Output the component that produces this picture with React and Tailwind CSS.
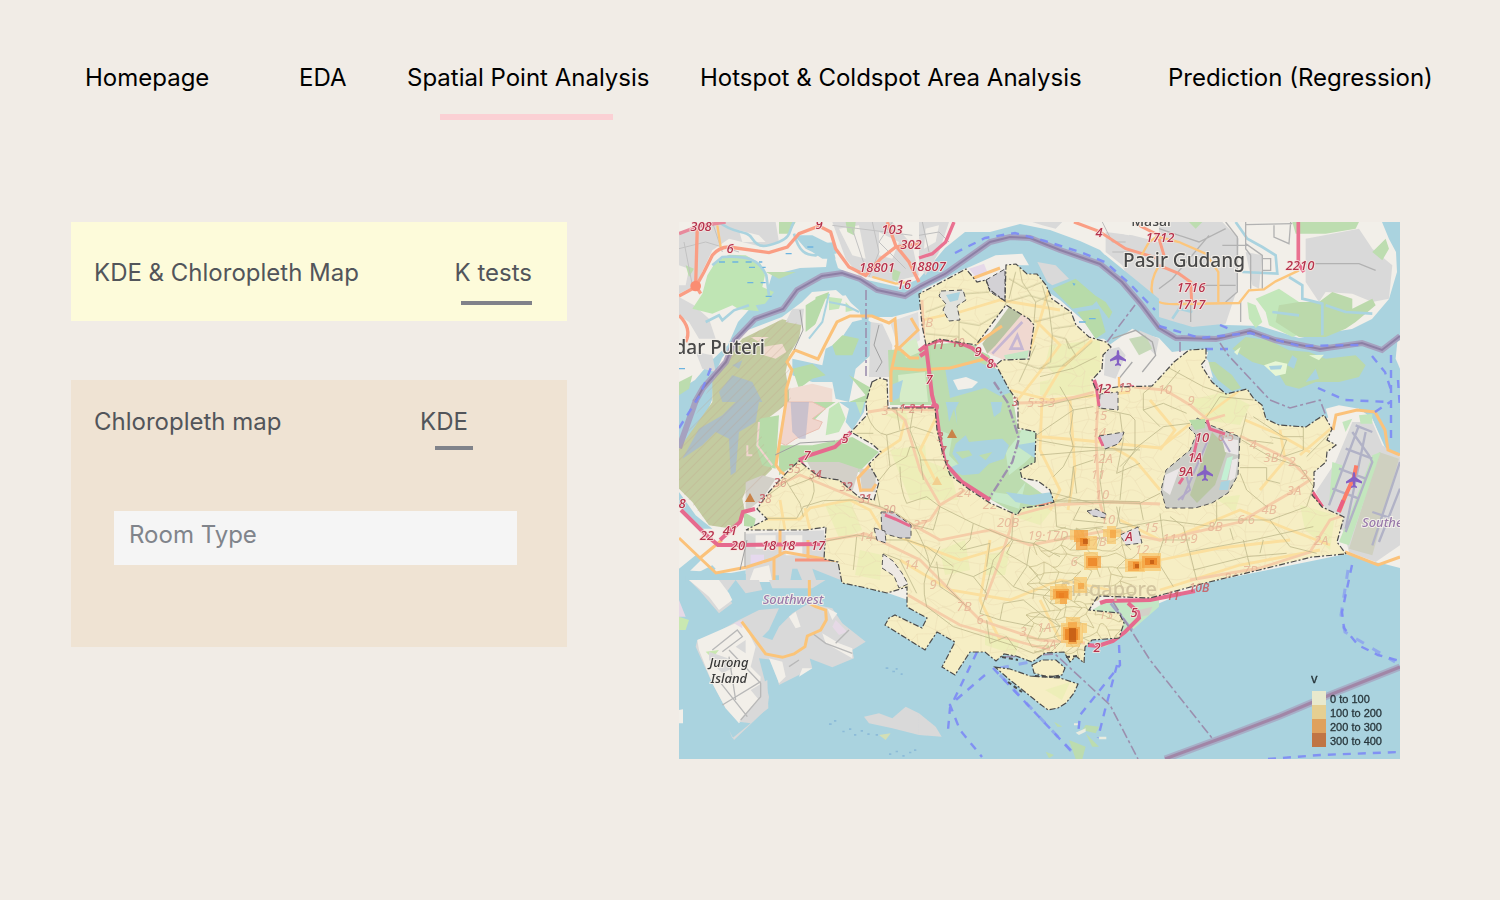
import React from "react";

const NAV = [
  { label: "Homepage" },
  { label: "EDA" },
  { label: "Spatial Point Analysis", active: true },
  { label: "Hotspot & Coldspot Area Analysis" },
  { label: "Prediction (Regression)" },
];

const REGION =
  "M872 382L880 378L887 380L888 408L935 408L937 430L943 455L950 475L970 490L990 503L1017 515L1022 508L1045 505L1054 502L1050 490L1038 481L1022 478L1020 470L1035 462L1036 432L1018 428L1018 402L1009 389L996 365L1002 360L1029 359L1034 325L1029 319L1006 305L976 345L939 339L926 345L922 325L919 294L936 285L966 269L977 282L986 280L990 290L1005 301L1006 265L1016 264L1027 274L1037 274L1046 285L1052 299L1071 312L1076 325L1089 337L1106 342L1111 347L1103 355L1102 369L1092 380L1096 390L1117 387L1152 386L1165 372L1174 362L1189 350L1206 349L1206 359L1201 365L1212 382L1226 394L1247 389L1254 399L1262 405L1266 419L1279 425L1306 427L1316 420L1324 415L1332 429L1327 440L1336 445L1327 452L1326 462L1314 472L1314 485L1312 495L1322 507L1344 517L1337 542L1346 554L1312 557L1259 570L1209 582L1150 598L1098 596L1089 610L1119 613L1124 623L1119 638L1092 640L1085 647L1084 663L1076 656L1070 662L1064 652L1045 653L1032 662L1016 656L1004 654L996 661L985 652L970 652L955 675L942 667L955 642L937 632L925 650L885 625L889 618L895 615L922 628L927 618L907 607L907 587L887 593L862 587L842 583L838 562L824 559L826 527L806 530L746 530L767 519L757 509L769 492L789 470L799 461L819 477L839 480L859 497L874 500L879 482L869 464L881 452L872 444L851 432L867 415L866 402Z";
const SENTOSA =
  "M995 667L1010 669L1030 676L1045 677L1060 678L1078 684L1074 693L1066 703L1058 708L1048 710L1040 704L1025 692L1010 680Z";
const BRANI = "M1032 665L1042 660L1056 660L1065 668L1062 675L1048 677L1034 673Z";

const HOLES = [
  ["#cbccc6", "M1197 418L1210 425L1240 437L1238 475L1228 493L1212 503L1195 508L1166 508L1161 490L1166 470L1190 450L1196 435L1189 428Z"],
  ["#d5d3d8", "M1099 436L1124 432L1122 438L1118 444L1105 449Z"],
  ["#d0cfd4", "M881 512L893 512L911 525L911 538L900 538L882 533Z"],
  ["#d5d3d8", "M1087 511L1096 509L1106 514L1105 518L1093 516Z"],
  ["#e3e0e4", "M1120 535L1138 527L1142 543L1126 545Z"],
  ["#e0dddc", "M1100 394L1118 392L1118 410L1099 408Z"],
  ["#e2e2dc", "M941 291L963 290L966 300L957 306L960 320L949 321L943 310L946 304L939 296Z"],
  ["#d3d1d5", "M986 280L1005 269L1005 301L990 292Z"],
  ["#dedbdd", "M874 528L885 531L886 543L877 540Z"],
  ["#eee9e4", "M883 554L893 561L902 573L908 584L899 588L894 576L882 568Z"],
];

/* Deterministic pseudo-random offset for the street mesh */
function jitter(i, j, k) {
  const v = Math.sin(i * 127.1 + j * 311.7 + k * 74.7) * 43758.5453;
  return v - Math.floor(v) - 0.5;
}

function mesh(x0, y0, x1, y1, step) {
  const pt = (i, j) => [
    Math.round(x0 + i * step + (j % 2) * step * 0.5 + jitter(i, j, 1) * step * 0.8),
    Math.round(y0 + j * step * 0.8 + jitter(i, j, 2) * step * 0.7),
  ];
  let d = "";
  for (let j = 0; y0 + j * step * 0.8 < y1; j++) {
    for (let i = 0; x0 + i * step < x1; i++) {
      const a = pt(i, j);
      const b = pt(i + 1, j);
      const c = pt(i, j + 1);
      if (jitter(i, j, 3) > -0.3) {
        d += `M${a}Q${(a[0] + b[0]) / 2} ${a[1] + jitter(i, j, 4) * step * 0.5} ${b}`;
      }
      if (jitter(i, j, 5) > -0.25) d += `M${a}L${c}`;
    }
  }
  return d;
}

const CORE = mesh(1030, 530, 1122, 655, 11);
const LANES = mesh(750, 265, 1340, 660, 15);

const PLANNING_WEST =
  "M85 345L200 260M130 290L180 370L190 410M210 290Q240 330 200 385M150 320L280 270M190 380L250 362L340 360L420 380M18 455H200M10 415H170L190 380M380 100Q400 160 440 165L520 140L580 160M400 160L350 160M445 85L470 90L480 150M520 90L510 150L540 230L550 300M440 165L450 260L500 230L510 200L530 205M450 260L410 310M410 330L420 380L470 400L520 435M480 260Q480 330 500 370L560 350M540 240L610 240M520 435L580 450L600 380M560 350L600 380L700 430L820 480L880 490L960 530M520 435Q560 500 570 560L640 570L700 590L740 640M250 485L350 465L430 480L500 480L570 550M350 470L340 570M570 560Q540 600 560 680M640 480L670 510L750 490L740 560M660 510L690 480L700 430M640 570L620 620L680 680M700 590L760 560L820 620L870 640M740 640L720 700L780 720L880 740M740 720L750 790L800 770L830 810M820 410L815 480L760 540L735 640M560 680L640 740L830 800L880 820L960 790M890 180L1000 200L1200 210M1000 90L990 160L1000 200L970 260L940 290M1060 80L1000 90L890 165M1000 90L960 20M1060 240L1000 260L990 350L945 365M945 360L1200 365M1095 210L1080 300L1095 400M1140 100L1150 180L1130 280L1200 250M945 370L950 440L1000 450L1090 440M1130 380L1140 430L1200 440M500 480L560 500L640 560M600 500L570 560M590 545L600 620L660 660M820 480L800 520L870 560L900 600M870 500L860 560L820 620M870 640L940 650M780 720L790 670L850 660L900 700M850 740L900 700L960 740M430 520L480 540L530 640";
const PLANNING_EAST =
  "M0 110L100 85L170 50M160 165L0 200M175 205L270 225L285 240V330L250 380L240 480M0 345L180 330L280 330L370 260L450 250M45 485L300 490L360 460M240 380L300 320M340 135L310 160V210L360 260M380 80L490 140L550 160M420 90L370 150M500 230L540 170L640 180M620 220L600 300M605 300L690 350L780 380L820 440M600 383H680V420L720 430M600 400L620 450L680 500M530 485V540L690 540L800 500L820 440M690 540L750 620L830 640M390 530L430 560L450 640L470 720M450 635L640 600L820 560M460 690L620 650L740 640M370 600L350 660L400 740M610 600L630 680M670 600L660 640M790 240V330L730 350M800 350L880 270M690 290L740 300L720 350M620 300L700 310M0 450L160 490M100 380L110 460M210 570L370 540L520 560L530 540M240 500L230 560M640 230L730 290H790M310 210L370 190L440 220M360 520L370 600L450 600M300 490L310 540M570 565L580 600M120 500L100 540L200 550";
const PLANNING_NORTH =
  "M20 270L100 240L140 215M60 210L110 240L120 300V370M140 215L210 210M120 300L180 310L250 270L262 240M20 335L120 345M130 320L180 360M270 170L320 200L370 180M262 240L330 220L400 240M300 130L310 180L350 240L345 300M370 190L390 260L400 340L395 420L360 440M400 320L470 310M345 300L460 270M400 340L440 350L450 380L510 350M440 350L470 400L430 430M290 150L270 230M350 240L400 215M300 420L360 440L440 430L520 360M350 370L300 480";

/* Each sheet is drawn at three times map scale */
function Sheet({ x, y, children }) {
  return <g transform={`translate(${x} ${y}) scale(0.3333)`}>{children}</g>;
}

const PLANE =
  "M0 -8C1 -8 1.4 -6 1.4 -3L8 1.5V3.5L1.4 1.5L1 5L3 6.8V8L0 7.2L-3 8V6.8L-1 5L-1.4 1.5L-8 3.5V1.5L-1.4 -3C-1.4 -6 -1 -8 0 -8Z";

const SHIELDS = [
  [701, 231, "308"], [730, 253, "6"], [819, 229, "9"], [892, 234, "103"], [911, 249, "302"],
  [877, 272, "18801"], [928, 271, "18807"], [904, 289, "16"], [1099, 237, "4"], [1160, 242, "1712"],
  [1191, 292, "1716"], [1191, 309, "1717"], [1300, 270, "2210"], [978, 356, "9"], [990, 368, "8"],
  [929, 384, "7"], [845, 443, "5"], [682, 508, "8"], [707, 540, "22"], [730, 535, "41"],
  [738, 550, "20"], [769, 550, "18"], [788, 550, "18"], [818, 550, "17"], [1202, 442, "10"],
  [1195, 462, "1A"], [1186, 476, "9A"], [1129, 541, "A"], [1134, 617, "5"], [1097, 652, "2"],
  [1104, 393, "12"], [807, 460, "7"],
];

const CUT = [
  [938, 349, "11"], [958, 347, "10"], [794, 473, "35"], [815, 479, "34"], [846, 491, "32"],
  [865, 503, "31"], [780, 487, "36"], [765, 503, "38"], [889, 514, "30"], [1226, 441, "6·5"],
  [1125, 392, "13"], [1199, 592, "10B"], [1173, 600, "11"], [940, 441, "3"], [943, 455, "7"],
  [945, 469, "7"], [912, 413, "1·2·1"], [1015, 406, "3"],
];

const FAINT = [
  [922, 327, "10B"], [885, 415, "3"], [1165, 394, "10"], [1191, 405, "9"], [1253, 449, "4"],
  [1271, 462, "3B"], [1292, 466, "2"], [1304, 479, "2"], [1294, 495, "3A"], [1269, 514, "4B"],
  [1246, 524, "6·6"], [1215, 531, "8B"], [1180, 543, "11·9·9"], [1321, 545, "2A"], [1100, 420, "15"],
  [1099, 437, "14"], [1102, 463, "12A"], [1098, 479, "11"], [1102, 499, "10"], [1008, 527, "20B"],
  [1048, 540, "19·17D"], [1041, 407, "5·3·3"], [964, 497, "24"], [990, 509, "22"], [920, 529, "27"],
  [866, 541, "14"], [911, 569, "14"], [933, 589, "9"], [964, 611, "7B"], [980, 624, "6"],
  [1023, 636, "3"], [1044, 632, "1A"], [1049, 649, "2A"], [1106, 619, "15"], [1108, 524, "10"],
  [1099, 546, "7B"], [1231, 582, "8A"], [1250, 575, "7B"], [1074, 566, "6"], [1142, 554, "12"],
  [1151, 532, "15"],
];

const HEAT = [
  [1070, 530, 14, 10, 0], [1074, 530, 14, 12, 1], [1076, 538, 12, 12, 1], [1080, 538, 10, 8, 2], [1087, 536, 10, 14, 0],
  [1083, 539, 5, 5, 3], [1084, 552, 14, 18, 0], [1086, 556, 15, 12, 1], [1088, 558, 9, 8, 2],
  [1103, 529, 18, 8, 0], [1107, 526, 9, 18, 0], [1110, 530, 6, 8, 1],
  [1125, 559, 20, 13, 0], [1128, 561, 16, 10, 1], [1133, 562, 8, 7, 2], [1135, 564, 4, 4, 3],
  [1139, 553, 22, 18, 0], [1142, 556, 18, 12, 1], [1145, 558, 12, 7, 2], [1150, 560, 4, 4, 3],
  [1050, 586, 22, 14, 0], [1055, 584, 12, 20, 0], [1053, 589, 16, 10, 1], [1056, 591, 12, 7, 2],
  [1060, 598, 7, 6, 1], [1059, 593, 5, 5, 2], [1074, 577, 13, 16, 0], [1078, 583, 6, 6, 1],
  [1061, 623, 22, 20, 0], [1066, 617, 14, 30, 0], [1063, 627, 17, 13, 1], [1068, 622, 9, 22, 1],
  [1065, 629, 13, 11, 2], [1069, 628, 7, 14, 3], [1082, 623, 5, 10, 0],
];
const HEAT_COLORS = ["#f8c66c", "#f3a03f", "#e97c1c", "#bb5310"];

const LEGEND = [
  ["#e8e9cd", "0 to 100"],
  ["#e5cf91", "100 to 200"],
  ["#dfa15d", "200 to 300"],
  ["#c07444", "300 to 400"],
];

function Labels({ items, ...rest }) {
  return (
    <g fontFamily="'Noto Sans', sans-serif" fontStyle="italic" textAnchor="middle" {...rest}>
      {items.map(([x, y, t]) => (
        <text key={`${x}-${y}`} x={x} y={y}>{t}</text>
      ))}
    </g>
  );
}

function Johor() {
  return (
    <g>
      <path
        fill="#f2efe9"
        d="M679 222V390L695 380L712 360L728 345L738 322L755 303L768 288L772 275L800 268L826 267L828 254L833 252L838 268L858 278L899 287L919 279L945 248L965 232L990 232L1020 224L1050 230L1080 241L1100 250L1112 262L1122 275L1140 298L1160 312L1192 318L1226 325L1260 326L1299 338L1326 333L1352 329L1372 319L1389 299L1397 272L1396 252L1389 239L1382 222Z"
      />
      <Sheet x={679} y={222}>
        <path fill="#d9d9d9" d="M0 30L120 0H290L300 60L250 75L150 50L100 85L50 190L0 215ZM0 225L45 250L90 290L110 350L60 350L30 300L0 280ZM460 0H640L700 70L720 160L640 180L540 160L500 110ZM50 390L100 400L110 450L70 440Z" />
        <path fill="#f2efe9" d="M180 25L240 40L260 60H190ZM480 20L540 10L560 110L520 100ZM600 30L660 60L640 110L600 100ZM0 130L30 140L20 190L0 190Z" />
        <path fill="#bfe5b4" d="M110 120L150 98L200 100L245 125L258 160L250 195L285 210L258 245L230 250L240 268L180 262L160 250L100 275L40 260L70 215L85 160Z" />
        <path fill="#bcdcae" d="M300 0H350L330 35H300ZM500 0H530L525 40L505 30ZM20 130L45 140L30 165ZM640 140L665 150L655 180L640 172ZM0 480L40 460L30 500L0 520ZM260 150L350 150L300 170Z" />
        <g fill="none" stroke="#aad3df" strokeWidth="8">
          <path d="M120 0C170 40 200 20 220 50S260 75 300 60S330 20 345 0M345 35C360 90 380 100 410 100L440 80L400 70L460 65L470 95M100 130L130 105C200 100 240 110 262 160L270 220M80 300L120 280L130 295L165 265L210 250" />
        </g>
        <path fill="#aad3df" d="M345 40L400 40L460 70L470 110L430 110L400 90L380 80Z" />
        <g stroke="#6db4e0" strokeWidth="4" strokeDasharray="18 22">
          <path d="M120 120H250M210 136H260M260 223H280M0 440H40M385 75H410M205 182H260M320 95H345" />
        </g>
        <g fill="none" stroke="#c2c2c2" strokeWidth="3">
          <path d="M0 80L80 60L180 90M100 0L130 90M15 60L40 190M520 20L560 140M580 0L600 90L570 165M640 0L600 60L680 140M460 10L700 40" />
        </g>
        <g fill="none" stroke="#fa9e84" strokeWidth="10">
          <path d="M55 10L50 190L65 215M0 222L50 195L75 150L100 100Q120 75 150 75L270 92L325 75L360 35L420 12L455 30L470 80L510 135L560 160L605 110L650 75L720 65M625 0L650 70L690 120L720 180M0 280Q40 320 20 360" />
        </g>
        <circle cx="50" cy="192" r="16" fill="#fa8d72" />
        <path fill="none" stroke="#e88a9c" strokeWidth="10" d="M0 35L60 12L140 0" />
        <path fill="none" stroke="#fcc67c" strokeWidth="7" d="M115 10L125 75M580 165L650 185L690 180" />
      </Sheet>
      <Sheet x={919} y={222}>
        <path fill="#d9d9d9" d="M0 0H90L60 90L20 160L0 130ZM340 0H430L410 20L370 10ZM560 30L640 40L720 60V280L640 200L610 130L560 90Z" />
        <path fill="#f2efe9" d="M20 20L60 10L50 60L15 80ZM480 0H640L630 40L560 25Z" />
        <g fill="none" stroke="#bdbdbd" strokeWidth="3"><path d="M0 40L60 30L90 60M10 0L30 90M550 0L580 60L620 60M580 90H640" /></g>
        <path fill="none" stroke="#ea7191" strokeWidth="10" d="M105 0L80 60L40 95L0 108" />
        <path fill="none" stroke="#fa9e84" strokeWidth="9" d="M465 0L540 28L620 80L720 110M640 0L720 40" />
        <path fill="none" stroke="#fcc67c" strokeWidth="7" d="M665 105L690 60L720 40M720 130Q690 180 700 220L720 240" />
      </Sheet>
      <Sheet x={1159} y={222}>
        <path fill="#d9d9d9" d="M0 0H190L240 50L235 200L215 260L200 305L100 315L0 285ZM440 50L600 20L640 80L700 130L690 230L640 240L580 215L500 210L480 240L440 180ZM260 90L310 100L300 200L280 190Z" />
        <path fill="#bdddb0" d="M400 0H600L590 20L500 35L410 35ZM640 90L680 50L690 80L670 115ZM90 0H130L110 20Z" />
        <path fill="#c3e7ba" d="M290 230L360 200L420 240L440 330L400 345L330 310L320 270ZM265 240L290 250L310 300L290 318L270 290Z" />
        <path fill="#bbd9ab" d="M360 250L420 240L480 240L520 210L580 230L580 260L640 230L650 250L590 300L560 320L500 345L420 345L350 300Z" />
        <g fill="none" stroke="#aad3df" strokeWidth="8">
          <path d="M230 0L265 50L310 75L350 100L355 155L250 150M390 165L430 190L430 230L490 245L490 340M500 250L560 270L640 275M340 270L420 280M40 290L60 260L100 270" />
        </g>
        <g fill="none" stroke="#b2b2b2" strokeWidth="4">
          <path d="M200 0L235 45V210L200 240M260 0V80L275 100V200M260 65L310 100V200M345 10V45L390 65L395 0M150 40L40 170L0 200M190 70H270M0 20L120 60L200 20M470 125H600L650 145M260 8L400 5M310 110H335V145H310M95 240V300M120 190H230M245 235V300" />
        </g>
        <path fill="none" stroke="#fa9e84" strokeWidth="9" d="M0 130L60 155L95 180L98 240M0 50L15 100" />
        <path fill="none" stroke="#ea7191" strokeWidth="11" d="M418 0V125L435 150" />
        <path fill="none" stroke="#fcc67c" strokeWidth="7" d="M0 240Q20 248 60 246L240 243L270 205L315 202L350 178L420 145M0 45L60 60L140 95L178 150V240" />
        <path fill="#bbd9ab" d="M220 380L260 345L330 355L390 385L450 390L500 410L590 400L620 430L600 465L540 480L470 480L420 500L380 490L350 440L280 420Z" />
        <path fill="#e7f6d5" d="M315 430L350 418L385 425L380 455L350 462ZM450 400L495 398L480 415ZM225 390L245 375L235 400Z" />
        <path fill="#aad3df" d="M330 432L370 430L365 442L335 443ZM400 400L415 410L405 440L385 430ZM440 480L470 440L480 470Z" />
        <path fill="#f2efe9" d="M715 360L723 355V440L710 410Z" />
      </Sheet>
    </g>
  );
}

function WestAndCentre() {
  return (
    <g>
      <path
        fill="#f2efe9"
        d="M714 376L722 358L736 340L748 330L782 317L802 302L812 292L836 290L859 310L866 332L869 317L892 317L919 310L922 290L966 268L1006 264L1060 300L1111 345L1130 330L1159 338L1172 352L1189 350L1208 352L1205 366L1214 384L1226 396L1262 407L1266 420L1306 428L1320 415L1335 405L1375 408L1388 445L1400 456V568L1346 554L1209 582L1120 620L1085 640L960 640L908 600L850 580L679 570V480L712 400Z"
      />
      <Sheet x={679} y={222}>
        <path fill="#c3cba0" d="M100 480L140 410L190 350L310 292L368 305L360 350L330 400L320 450L335 540H100Z" />
        <path fill="#f0dccf" d="M250 375L310 365L322 390L290 410L255 400ZM215 345L270 345L240 360Z" />
        <path fill="#aad3df" d="M340 410L430 430L440 380L480 360L520 300L560 290L590 310L575 400L530 440L510 540L470 530L460 480L400 480L340 460Z" />
        <path fill="#b7dba9" d="M340 440L400 425L440 460L400 470L360 500ZM510 460L580 500L600 540H510L560 520ZM380 250L420 225L430 290L380 330ZM490 340L540 350L520 400L470 400L460 370ZM410 225L450 210L440 250L400 290Z" />
        <path fill="#f2efe9" d="M440 230L500 220L530 265L470 290L430 340L400 330Z" />
        <path fill="#c4e6b9" d="M450 225L490 230L480 260L450 265ZM500 240L525 265L500 270Z" />
        <path fill="#d9d9d9" d="M575 300L610 305L640 370L635 465L570 465ZM340 260L375 260L370 310L320 300Z" />
        <path fill="#f0dcd2" d="M330 500L400 485L460 500L460 540H330Z" />
        <path fill="#a9bccb" opacity=".8" d="M120 510L160 460L220 480L250 540H130ZM160 430L190 415L180 440Z" />
        <path fill="none" stroke="#aad3df" strokeWidth="6" d="M450 215L430 300L390 350M450 240L500 250L540 270" />
      </Sheet>
      <Sheet x={679} y={402}>
        <path fill="#c3cba0" d="M100 0H330L240 70L235 140L280 200L250 230L210 240L190 290L200 340L160 380L90 370L40 300L0 260V140Z" />
        <path fill="#a9bccb" opacity=".85" d="M60 80L130 40L170 0H240L230 60L180 90L170 210L155 220L150 110L110 90L70 130L10 170Z" />
        <path fill="#b7dba9" d="M240 50L300 40L290 200L250 190L230 130ZM300 130H400L520 105L600 150L560 190L540 210L400 180L360 180L300 220ZM400 60L440 20L470 0H330L320 40Z" />
        <path fill="#aad3df" d="M480 0H560L555 30L520 85L500 60L510 20Z" />
        <path fill="#c4e6b9" d="M450 20L480 0L500 50L480 90L440 100ZM530 0H556L545 40Z" />
        <path fill="#f0d5cd" stroke="#e9bfb2" strokeWidth="3" d="M320 0H400L440 20L400 50L430 60L420 80L350 110L320 130L300 120Z" />
        <path fill="#b9b8cc" opacity=".7" d="M335 0H390L380 110H360L340 90Z" />
        <path fill="none" stroke="#f0d5cd" strokeWidth="6" d="M240 60L235 130L280 190M205 130V160H220" />
        <path fill="#d3d0c8" d="M385 180L480 180L540 200L520 270L400 210ZM200 240L250 220L290 230L250 290L200 330ZM540 200L590 200L590 270H550Z" />
        <path fill="#d9d9d9" d="M200 395L435 385L440 470L480 480L500 540H200Z" />
        <path fill="#f2efe9" d="M230 400H290V440H230ZM320 400H370V460H320ZM225 500L270 490L280 540H210Z" />
        <path fill="#aad3df" d="M340 500L355 500L380 560H330ZM400 500L500 540V560H420ZM285 520H300V560H285Z" />
        <path fill="#e6d9ee" d="M215 458H255V485H215Z" />
        <path fill="#b7dba9" d="M195 330L230 350L225 375L195 372Z" />
        <path fill="#aad3df" d="M0 270L50 340L100 380H70L40 350L0 310ZM0 500L50 460L70 470L20 520V540H0ZM60 510L100 490L110 500L70 540H50ZM120 520L200 505V540H120Z" />
      </Sheet>
      <Sheet x={919} y={222}>
        <path fill="#aad3df" d="M170 100L260 105L300 125H380L410 180L470 260L530 350L600 350L720 310V230L560 100L250 60Z" />
        <path fill="#f2efe9" d="M140 140L230 100L310 95L330 130L255 130L210 180L170 175ZM570 370L640 320L720 360V500H550Z" />
        <path fill="#e6d9e9" d="M150 140L195 125L205 150L170 165Z" />
        <path fill="#d9d9d9" d="M355 120L410 130L450 170L400 190L385 180ZM560 385L600 375L620 400L590 470L555 460ZM660 325L720 350L710 400L680 370Z" />
        <path fill="#b7dba9" d="M400 200L470 170L540 230L520 250L460 260ZM475 270L540 260L560 330L530 350ZM520 215L560 240L580 270L570 290L540 250Z" />
        <path fill="#c6d9b8" d="M630 350L680 340L700 380L660 400Z" />
        <path fill="none" stroke="#aaa" strokeWidth="4" d="M580 350L650 325L700 360L710 400L670 450M600 470L640 420" />
        <path fill="none" stroke="#fcc67c" strokeWidth="7" d="M600 465V500" />
        <path fill="#6db4e0" d="M480 298H500V302H480ZM460 182L470 185L465 192ZM510 288H530V292H510Z" />
        <path fill="#f0d8d0" d="M200 390L290 260L345 300L335 405L250 412L220 400Z" />
        <path fill="#c4e6c4" d="M255 400L330 385L325 410L260 412Z" />
        <path fill="#b9c4a3" d="M190 365L270 255L310 275L230 370L205 395Z" />
        <path fill="none" stroke="#c6b6d2" strokeWidth="8" d="M220 395L310 300M275 380L295 340L310 380Z" />
        <path fill="#b7dba9" d="M20 370L130 360L210 400L240 460L280 540H0V390Z" />
        <path fill="#aad3df" d="M80 460L180 440L240 470L270 540H70ZM40 490L80 480L60 520Z" />
        <path fill="#f2efe9" d="M100 475L140 465L175 480L160 500L120 505Z" />
      </Sheet>
      <path fill="#bcdcaf" d="M888 350L925 348L932 405L890 405ZM930 345L975 345L1012 392L1018 430L1036 432V462L1020 478L1054 502L1017 515L950 475L935 410Z" />
      <path fill="#dedede" d="M890 322L918 312L920 340L900 352Z" />
      <path fill="#d6ecc8" d="M902 345L916 338L920 352L906 358ZM898 375L925 372L928 402H900Z" />
      <path fill="#aad3df" d="M945 368L978 362L1004 372L1012 392L1000 396L985 388L950 398ZM891 385L903 380L899 398L891 402Z" />
      <path fill="#f2efe9" d="M953 380L966 377L978 382L972 388L958 390Z" />
      <Sheet x={919} y={402}>
        <path fill="#c7e9c8" d="M50 80L100 100L90 160L130 200L90 210L65 150ZM260 150L300 100L310 80L350 90V150L320 180L270 220ZM220 270L290 280L320 240L300 320L220 295Z" />
        <path fill="#aad3df" d="M100 155L110 125L140 100L150 120L200 115L250 110L270 130L255 170L210 185L180 215L130 220L85 200L120 185ZM80 0H120L110 20L115 70L105 20L90 60L85 20ZM215 0H250L245 30L225 45ZM290 130L350 120V170L320 150ZM260 270L330 280L400 270L405 300L340 310L290 300Z" />
        <path fill="#bcdcaf" d="M110 150L150 145L160 160L130 170ZM180 160L220 150L200 175Z" />
        <path fill="none" stroke="#9d90ae" strokeWidth="7" strokeDasharray="28 7 6 7" d="M225 -60L265 0L300 110L280 180L210 290" />
      </Sheet>
      <Sheet x={1159} y={402}>
        <path fill="#aad3df" d="M310 0H723V160L680 140L640 50L600 20L540 30L500 50L440 75L360 70L310 50Z" />
        <path fill="#f2efe9" d="M500 20L540 10L600 20L640 50L680 150L723 160V490L640 480L560 455L470 270L470 210L530 120Z" />
        <path fill="#d9d9d9" d="M580 60L640 60L670 130L723 165V430L650 480L570 450L555 390L500 320L470 270L530 180Z" />
        <path fill="#cfd0c0" d="M660 150L720 170L640 460L570 440Z" />
        <path fill="#c3e6bd" d="M550 60L580 50L560 90ZM600 40L640 35L640 65H605ZM640 160L665 150L570 430L540 420L560 370ZM520 180L550 190L530 270L510 310Z" />
        <path fill="none" stroke="#b1b2c6" strokeWidth="7" d="M600 70L510 310M620 90L560 380M580 90L630 160L640 180L560 390M560 140L640 170M540 200L620 230M520 260L600 290M723 180L640 430M723 260L660 420M640 330L700 350M590 70L640 90" />
        <path fill="none" stroke="#fc7d68" strokeWidth="12" d="M592 190L585 225L560 280L540 330" />
        <path fill="none" stroke="#ea5f83" strokeWidth="12" d="M553 295L538 330M460 270L490 315" />
      </Sheet>
      <path fill="#bbd9ab" d="M1206 362L1215 362L1232 375L1241 388L1232 391L1218 380Z" />
      <path fill="#f2efe9" d="M1203 358L1208 360L1213 378L1208 376Z" />
      <Sheet x={679} y={580}>
        <path fill="#d9d9d9" d="M30 0H240L250 30L200 40L170 0L140 40L160 70L120 100L60 30ZM180 120L240 90L300 85L270 150L250 170L280 180L300 140L340 100L390 70L460 85L490 130L560 185L520 210L525 235L460 262L390 235L380 190L400 265L300 315L285 240L240 235L270 350L265 385L165 480L150 450L160 475L215 430L180 425L140 385L100 310L50 200L55 180L100 165ZM270 0H440L400 25H280ZM555 410L600 400L640 415L680 380L720 400V465L640 445L570 430Z" />
        <path fill="#f2efe9" d="M30 0H120L150 40L160 60L120 90L90 50ZM55 180L180 125L205 150L230 200L215 260L245 290L240 360L180 430L140 385L100 310L60 210ZM330 110L350 95L365 140L350 145ZM270 235L310 245L320 290L300 310ZM430 160L480 190L520 205V235L440 190ZM445 85L475 100L460 120ZM0 390L12 388V430H0ZM370 265L400 265L360 290Z" />
        <path fill="#c9e8b1" d="M0 110L30 120L20 150H0ZM80 215L120 210L100 235Z" />
        <path fill="#e6d9e6" d="M0 60L20 110H0ZM470 120L505 155L480 165L460 140ZM165 130L190 120L190 145Z" />
        <path fill="#d9d9d9" d="M90 215L190 250L130 280L90 240ZM170 200L200 180L200 220ZM215 330L265 300L268 385L215 425L180 425L240 360Z" />
        <path fill="none" stroke="#b8b8b8" strokeWidth="4" d="M100 210L175 150L190 170L130 215M150 210L245 310V350L185 420M130 375L245 305M110 290L205 410M150 230L170 360M330 260L360 240M400 160L440 190L520 220M470 190L510 150" />
        <path fill="none" stroke="#fbc478" strokeWidth="9" d="M188 125L260 222L310 232L345 222L378 200L385 168L425 150L442 120L440 90L410 80L391 70V0" />
        <path fill="#8cbbd8" d="M620 262h8v5h-8zM640 272h8v5h-8zM650 264h6v5h-6zM665 280h6v5h-6zM450 430h8v5h-8zM465 420h7v5h-7zM490 452h7v5h-7zM510 445h7v5h-7zM525 462h7v5h-7zM545 450h7v5h-7zM565 460h7v5h-7zM590 462h7v5h-7zM630 520h7v5h-7zM650 512h7v5h-7zM670 525h7v5h-7zM690 515h7v5h-7zM705 508h7v5h-7z" />
        <path fill="#d3dfb5" d="M600 465L635 460L620 480Z" />
      </Sheet>
      <Sheet x={919} y={580}>
        <path fill="#d9d9d9" d="M0 400L50 440L68 470L0 465Z" />
        <path fill="#c3e7c5" d="M520 90L560 65L720 60V80L640 150L560 200L515 195L610 170L610 110Z" />
        <path fill="#d3d0c8" d="M660 90L700 80L690 105L665 110Z" />
        <path fill="none" stroke="#a3a9c9" strokeWidth="8" d="M575 70L640 150" />
        <path fill="#bcdcaf" d="M450 480L500 500L490 537H470ZM500 460L540 500L520 500ZM500 435L540 440L530 460L490 450ZM405 425L430 440L415 440ZM380 515L405 525L390 535Z" />
        <path fill="#e9ece0" d="M465 430H480V436H465ZM470 458L500 445V455L480 465ZM540 470H562V478H540Z" />
      </Sheet>
    </g>
  );
}

function Roads() {
  return (
    <g fill="none">
      <path stroke="#fbc27a" strokeWidth="3" d="M774 580V558L785 552L830 560L850 562M700 558L716 573L747 567L775 558M700 558L722 540M679 538L700 558M786 402L776 465L781 472L790 478M786 402V390L792 370L787 362L795 350L818 359L825 345L837 322L850 316L872 316L889 323L895 319L897 345L891 372V402M897 350L918 330L911 318M892 368L919 370L950 368L988 358M895 345L910 358H919M861 492L858 478L870 465L880 460M808 560V540M780 530V555M1333 430L1336 415L1357 410L1375 412L1385 430L1388 450L1400 455M1345 552L1378 565L1400 557M976 344L1002 326M958 284L1000 268M862 490L872 490L876 484" />
      <path stroke="#e66a8e" strokeWidth="4" d="M681 510L705 534L718 545L738 545L820 544M720 540L740 522L743 512L755 509M799 460L810 455L835 447L851 432M799 460L808 472L820 478M919 351L928 344L942 339L958 342L972 348L985 358L996 366M926 346L932 395L936 410L940 440L945 463L962 482L990 500M920 356L926 352M1094 380L1098 392L1134 387M905 408H936" />
      <circle cx="935" cy="407" r="4" fill="#e66a8e" />
      <path stroke="#f5957f" strokeWidth="3" d="M795 560H830M1036 507L1052 503" />
      <path stroke="#e66a8e" strokeWidth="4" d="M1100 603L1106 601L1150 600L1195 591M1128 603L1138 612L1139 618L1125 632L1113 641L1098 646L1088 645" />
      <path stroke="#a1a1a1" strokeWidth="1" d="M879 325L874 345L882 362L876 372M800 310L803 330L794 350M745 567V532M740 570L747 540M775 455L800 443L835 441" />
    </g>
  );
}

function Region() {
  const areas = `${REGION}${SENTOSA}${BRANI}`;
  return (
    <g>
      <path d={areas} fill="#f6eec4" />
      <g clipPath="url(#region)">
        <path
          fill="#eaeeb4"
          opacity=".75"
          d="M1050 345L1100 340L1100 375L1060 380L1045 365ZM825 505L850 500L862 530L840 540ZM860 550L882 555L880 580L855 575ZM925 460L950 470L958 500L930 500ZM1190 400L1225 392L1250 405L1240 425L1205 420ZM940 550L965 540L970 570L945 575ZM985 630L1020 640L1015 655L985 645ZM1045 690L1070 682L1062 700ZM1215 498L1240 495L1235 512ZM1300 505L1335 515L1330 550L1305 530ZM885 415L905 410L910 425ZM890 450L925 445L930 500L910 500ZM1040 382L1090 370V395L1040 395ZM1025 490L1060 500L1040 525L1018 518ZM985 555L1010 550L1005 575L985 575Z"
        />
        <path d={LANES} fill="none" stroke="#ebdcb4" strokeWidth="0.9" opacity=".55" />
        <path
          fill="none"
          stroke="#fbdf9e"
          strokeWidth="2.8"
          d="M760 519H800L810 508L850 500L870 510L882 530L920 545L960 560L1010 545M922 320L960 312L1000 300L1060 310M1010 390L1050 400L1130 392M1050 285L1040 320L1030 350M1035 320L1060 345L1045 365L1010 410M1092 340L1060 370L1042 400L1040 450L1060 490L1050 510M1020 435L1080 440L1160 448L1190 424M1150 400L1175 430L1160 450M1245 420L1280 435L1310 452M1180 535L1240 510L1290 530L1330 545M1160 560L1220 548L1290 540M1160 590L1240 565L1320 550M940 410L920 450L935 480M870 460L900 440L905 420M780 500L785 530V550M805 508L810 530M1100 440L1135 460L1160 490M1070 400L1075 470L1068 510M900 560L950 590L1010 600L1060 580L1110 590M1120 520L1160 540L1200 530M1040 600L1060 640M990 540L980 600L1000 640M1240 390L1200 420M1280 430L1285 460L1260 490M1300 455L1335 425"
        />
        <path
          fill="none"
          stroke="#f5cda8"
          strokeWidth="2.8"
          d="M922 300L924 340M755 495L800 475L860 500L890 512L940 540L990 530L1030 545L1110 530L1160 540L1240 522L1290 493L1310 480L1290 460L1240 436M1015 500L1010 530L1000 560L985 600M1098 400L1096 440L1099 500L1105 520M826 540L866 534L920 560L950 590L980 620L1040 640L1085 643M908 595L925 605L960 625L1020 642L1050 650M1190 580L1260 568L1310 552L1330 520L1342 516M1017 515L1054 505L1110 502L1160 504M868 412L887 409L935 410M887 405L905 420L920 470L940 505L930 520L900 530M1134 387L1165 390L1190 405L1208 420L1225 415M940 505L965 490M1018 403L1055 402L1094 392"
        />
        <g fill="none" stroke="#b9b487" strokeWidth="2.6" strokeLinejoin="round" opacity=".85">
          <Sheet x={740} y={380}><path d={PLANNING_WEST} /></Sheet>
          <Sheet x={1040} y={340}><path d={PLANNING_EAST} /></Sheet>
          <Sheet x={919} y={222}><path d={PLANNING_NORTH} /></Sheet>
        </g>
        <path d={CORE} fill="none" stroke="#c4bb88" strokeWidth="0.9" opacity=".8" />
        <Labels items={FAINT} fontSize="13" fill="#e6b497" opacity=".85" />
        <path d="M932 485L937 476L942 485Z" fill="#f2cf8f" />
      </g>
      <text x="1060" y="596" fontFamily="'Noto Sans', sans-serif" fontSize="20" fontWeight="500" fill="#d3c6a0">Singapore</text>
      {HOLES.map(([fill, d]) => (
        <path key={d} d={d} fill={fill} stroke="#545454" strokeWidth="1" strokeDasharray="5 3" />
      ))}
      <path fill="#b9c6a3" d="M1212 432L1228 448L1215 485L1197 503L1190 495Z" />
      <path fill="#ebe7e7" d="M1222 438L1238 440V455L1225 452ZM1165 475L1180 468L1170 495L1163 490ZM1232 460L1238 458L1235 478L1228 482Z" />
      <path fill="#aad3df" d="M1221 482L1230 480L1228 490L1219 490ZM946 295L960 292L958 300L950 302Z" />
      <path fill="#c4f0d4" d="M1227 458L1233 456L1227 480L1221 480Z" />
      <path fill="#b7dba9" d="M1189 420L1205 419L1205 428L1195 430Z" />
      <path fill="none" stroke="#b3aac8" strokeWidth="2" d="M1208 440L1182 500M1220 435L1230 452M1185 470L1190 490L1178 500" />
      <path fill="none" stroke="#e66a8e" strokeWidth="3" d="M1198 436L1193 458M1183 478L1179 484M1207 420L1210 429L1225 434M1099 437L1103 446M1096 385L1099 406M885 515L895 519L910 526" />
      <path d={areas} fill="none" stroke="#4c4c4c" strokeWidth="1.2" strokeDasharray="6 2 2 2" />
      <path fill="none" stroke="#4c4c4c" strokeWidth="2" strokeDasharray="4 3" d="M1002 657L1018 660M1008 682L1022 692M1035 676L1060 677M1066 657L1078 656" />
      <g shapeRendering="crispEdges">
        {HEAT.map(([x, y, w, h, c]) => (
          <rect key={`${x}-${y}-${w}`} x={x} y={y} width={w} height={h} fill={HEAT_COLORS[c]} opacity=".7" />
        ))}
      </g>
    </g>
  );
}

function Boundaries() {
  const strait =
    "M695 402L703 388L726 362L735 340L755 319L783 309L797 290L822 276L842 273L860 279L877 290L905 296L921 286L945 274L990 242L1010 237L1030 238L1060 250L1100 264L1122 282L1140 303L1159 328L1176 338L1216 339L1250 331L1275 340L1320 349L1362 343L1382 350L1400 336";
  return (
    <g fill="none">
      <path stroke="#a596b8" strokeWidth="6" opacity=".8" d={strait} />
      <path stroke="#7f6d96" strokeWidth="2" opacity=".65" d={strait} />
      <path stroke="#a596b8" strokeWidth="6" opacity=".8" d="M696 400L679 448" />
      <path stroke="#a596b8" strokeWidth="7" opacity=".6" d="M1165 759L1230 735L1280 716L1332 694L1400 667" />
      <path stroke="#a07c9f" strokeWidth="3" opacity=".8" d="M1165 759L1230 735L1280 716L1332 694L1400 667" />
      <path
        stroke="#7c89f5"
        strokeWidth="2.4"
        strokeDasharray="8 7"
        opacity=".9"
        d="M955 253L985 238L1015 233L1045 241L1080 252L1105 262L1130 284L1155 310M1159 326L1200 338L1250 333L1300 346L1360 345M1372 356L1385 372L1391 390M1391 355V440M1205 349H1235M1220 325L1232 330M1398 380L1400 410M1318 388L1345 400L1390 402M679 428L700 395L712 365M1375 412L1390 402M993 668L1075 755M977 652L950 708L948 730M985 675L950 705L960 730L982 757M1119 645L1120 665L1080 715L1078 735M1117 665L1105 710L1098 738M1352 565L1342 612L1344 628L1358 645L1378 655L1400 661M1268 759L1320 755L1400 752"
      />
      <path stroke="#7c89f5" strokeWidth="3" strokeDasharray="9 10" opacity=".55" d="M1000 675L1075 755M1348 570L1341 615L1345 632L1395 662M1000 668L1030 662" />
      <path
        stroke="#9c8fae"
        strokeWidth="1.6"
        strokeDasharray="10 3 3 3"
        d="M866 290V378M1005 657L1055 654L1110 705L1138 759M1113 602L1150 660L1212 738M1220 343L1228 355L1270 400L1290 408L1320 400L1326 416M1107 342L1135 305M1180 342V352"
      />
    </g>
  );
}

function DensityMap() {
  return (
    <svg
      className="block h-auto w-full overflow-hidden"
      viewBox="679 222 721 537"
      role="img"
      aria-label="Kernel density map of Singapore"
    >
      <defs>
        <clipPath id="region"><path d={`${REGION}${SENTOSA}${BRANI}`} /></clipPath>
        <pattern id="hatch" width="7" height="7" patternUnits="userSpaceOnUse" patternTransform="rotate(45)">
          <path d="M0 0V7" stroke="#c09a86" strokeWidth="1" opacity=".55" />
        </pattern>
        <filter id="soft" x="0" y="0" width="100%" height="100%">
          <feGaussianBlur stdDeviation="0.6" />
        </filter>
      </defs>
      <g filter="url(#soft)">
        <rect x="679" y="222" width="721" height="537" fill="#aad3df" />
        <Johor />
        <WestAndCentre />
        <path fill="url(#hatch)" d="M712 382L742 338L782 319L802 324L789 355L791 402L758 425L772 469L746 500L732 529L709 525L679 488V449Z" />
        <Roads />
        <Boundaries />
        <Labels items={CUT} fontSize="12" fontWeight="500" fill="#bd3f58" opacity=".85" />
        <Region />
        <Labels items={CUT} fontSize="12" fill="#d07f76" opacity=".6" />
        <path fill="#c98348" d="M745 502L750 493L755 502ZM947 438L952 429L957 438Z" />
        {[[1118, 358], [1205, 473], [1354, 480]].map(([x, y]) => (
          <path key={x} d={PLANE} transform={`translate(${x} ${y})`} fill="#8461c4" />
        ))}
        <Labels items={SHIELDS} fontSize="13" fontWeight="500" fill="#b5304b" stroke="#f6e4df" strokeWidth="1.6" paintOrder="stroke" />
        <g fontFamily="'Noto Sans', sans-serif" fontWeight="500" fill="#484848" stroke="#f2efe9" strokeWidth="2" paintOrder="stroke">
          <text x="1184" y="267" fontSize="19" textAnchor="middle">Pasir Gudang</text>
          <text x="765" y="354" fontSize="19" textAnchor="end">Bandar Puteri</text>
          <text x="1151" y="226" fontSize="14" textAnchor="middle">Masai</text>
        </g>
        <g fontFamily="'Noto Sans', sans-serif" fontStyle="italic" fontWeight="500" fontSize="13" textAnchor="middle" stroke="#f2efe9" strokeWidth="2" paintOrder="stroke">
          <text x="729" y="667" fill="#383838">Jurong</text>
          <text x="729" y="683" fill="#383838">Island</text>
          <text x="793" y="604" fill="#9879aa">Southwest</text>
          <text x="1362" y="527" fill="#9879aa" textAnchor="start">Southeast</text>
        </g>
        <g fontFamily="'Liberation Sans', sans-serif" fontSize="11" fill="#28363b" stroke="#28363b" strokeWidth="0.3">
          <text x="1311" y="683" fontSize="13">v</text>
          {LEGEND.map(([color, label], i) => (
            <g key={label}>
              <rect x="1312" y={691 + i * 14} width="14" height="14" fill={color} stroke="none" />
              <text x="1330" y={703 + i * 14}>{label}</text>
            </g>
          ))}
        </g>
      </g>
    </svg>
  );
}

export default function App() {
  return (
    <div className="min-h-screen bg-[#f1ece6] pt-[62px] pb-16 font-['Inter',sans-serif] text-2xl/8 text-black">
      <nav className="grid grid-cols-[214fr_108fr_293fr_468fr_272fr] pr-[60px] pl-[85px] whitespace-nowrap">
        {NAV.map((item) => (
          <a key={item.label} href="#" aria-current={item.active ? "page" : undefined} className="block justify-self-start">
            {item.label}
            {item.active && <span className="mt-5 ml-[33px] block h-1.5 w-[173px] bg-[#fbd0d4]" />}
          </a>
        ))}
      </nav>

      <main className="mt-[102px] grid grid-cols-[496fr_721fr] items-start gap-28 pr-[100px] pl-[71px]">
        <div className="flex flex-col gap-[59px] text-[#52555a]">
          <section className="flex items-start justify-between bg-[#fdfbda] pt-[35px] pr-[35px] pb-4 pl-[23px]">
            <button type="button">KDE &amp; Chloropleth Map</button>
            <button type="button">
              K tests
              <span className="mt-3 ml-auto block h-1 w-[71px] bg-[#80818a]" />
            </button>
          </section>

          <section className="bg-[#efe3d3] pt-[26px] pb-[82px]">
            <div className="flex items-start justify-between pr-[94px] pl-[23px]">
              <button type="button">Chloropleth map</button>
              <button type="button" className="text-left">
                KDE
                <span className="mt-2 ml-[15px] block h-1 w-[38px] bg-[#80838a]" />
              </button>
            </div>
            <div className="mt-[61px] pr-[50px] pl-[43px]">
              <input
                type="text"
                aria-label="Room Type"
                placeholder="Room Type"
                className="block h-[54px] w-full bg-[#f5f5f5] px-[15px] pb-2 outline-none placeholder:text-[#80848b]"
              />
            </div>
          </section>
        </div>

        <DensityMap />
      </main>
    </div>
  );
}
